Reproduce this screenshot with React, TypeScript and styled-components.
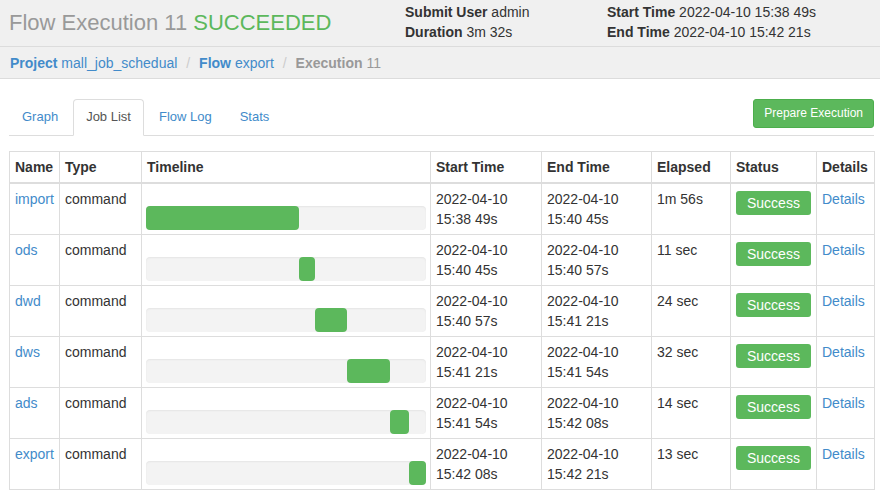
import styled, { createGlobalStyle } from "styled-components";

const GlobalStyle = createGlobalStyle`
  body {
    margin: 0;
    background: #fff;
    font-family: "Liberation Sans", Arial, sans-serif;
    font-size: 14px;
    line-height: 20px;
    color: #333;
  }
  a {
    color: #428bca;
    text-decoration: none;
  }
`;

const Header = styled.div`
  display: grid;
  grid-template-columns: 396px 202px 1fr;
  height: 46px;
  padding-left: 9px;
  background: #f0f0f0;
  border-bottom: 1px solid #dcdcdc;
`;

const Title = styled.h1`
  margin: 0;
  font-size: 22px;
  font-weight: normal;
  line-height: 46px;
  color: #999;
  white-space: nowrap;
`;

const Status = styled.span`
  color: #5cb85c;
`;

const InfoCol = styled.div`
  padding-top: 2px;
  white-space: nowrap;
`;

const InfoLine = styled.div`
  line-height: 20px;
`;

const Label = styled.strong`
  font-weight: bold;
  color: #333;
`;

const Breadcrumb = styled.div`
  display: flex;
  height: 21px;
  padding: 6px 10px 4px;
  background: #f0f0f0;
  border-bottom: 1px solid #dcdcdc;
  white-space: nowrap;
`;

const Crumb = styled.span<{ $active?: boolean }>`
  color: ${(p) => (p.$active ? "#999" : "#428bca")};
`;

const Sep = styled.span`
  padding: 0 5px 0 9px;
  color: #ccc;
`;

const Main = styled.div`
  padding: 20px 6px 0 9px;
`;

const TabBar = styled.div`
  display: flex;
  justify-content: space-between;
  align-items: flex-start;
  border-bottom: 1px solid #ddd;
`;

const Tabs = styled.ul`
  display: flex;
  margin: 0 0 -1px;
  padding: 0;
  list-style: none;
`;

const Tab = styled.li<{ $active?: boolean }>`
  margin-right: 2px;
  padding: 7px 12px 8px;
  font-size: 13px;
  line-height: 20px;
  border: 1px solid ${(p) => (p.$active ? "#ddd" : "transparent")};
  border-bottom-color: ${(p) => (p.$active ? "#fff" : "transparent")};
  border-radius: 4px 4px 0 0;
  background: ${(p) => (p.$active ? "#fff" : "transparent")};
  color: ${(p) => (p.$active ? "#555" : "#428bca")};
`;

const GreenButton = styled.button`
  height: 29px;
  padding: 5px 10px;
  font-family: inherit;
  font-size: 12px;
  line-height: 17px;
  color: #fff;
  background: #5cb85c;
  border: 1px solid #4cae4c;
  border-radius: 3px;
`;

const Table = styled.table`
  width: 865px;
  margin-top: 15px;
  border-collapse: collapse;
  table-layout: fixed;
  border: 1px solid #ddd;
`;

const Th = styled.th`
  padding: 5px;
  text-align: left;
  font-weight: bold;
  line-height: 20px;
  border: 1px solid #ddd;
  border-bottom: 2px solid #ddd;
  white-space: nowrap;
`;

const Td = styled.td<{ $tight?: boolean }>`
  padding: ${(p) => (p.$tight ? "5px 4px" : "5px")};
  vertical-align: top;
  line-height: 20px;
  border: 1px solid #ddd;
  white-space: nowrap;
`;

const Track = styled.div`
  display: flex;
  height: 24px;
  margin: 17px 0 -1px;
  background: #f3f3f3;
  border-radius: 4px;
  box-shadow: inset 0 1px 2px rgba(0, 0, 0, 0.06);
`;

const Fill = styled.div`
  height: 100%;
  background: #5cb85c;
  border-radius: 4px;
`;

const SuccessTag = styled.span`
  display: inline-block;
  margin-top: 2px;
  padding: 2px 11px;
  line-height: 20px;
  color: #fff;
  background: #5cb85c;
  border-radius: 3px;
`;

type Job = {
  name: string;
  offset: number;
  duration: number;
  start: [string, string];
  end: [string, string];
  elapsed: string;
};

const TOTAL = 212;

const jobs: Job[] = [
  { name: "import", offset: 0, duration: 116, start: ["2022-04-10", "15:38 49s"], end: ["2022-04-10", "15:40 45s"], elapsed: "1m 56s" },
  { name: "ods", offset: 116, duration: 12, start: ["2022-04-10", "15:40 45s"], end: ["2022-04-10", "15:40 57s"], elapsed: "11 sec" },
  { name: "dwd", offset: 128, duration: 24, start: ["2022-04-10", "15:40 57s"], end: ["2022-04-10", "15:41 21s"], elapsed: "24 sec" },
  { name: "dws", offset: 152, duration: 33, start: ["2022-04-10", "15:41 21s"], end: ["2022-04-10", "15:41 54s"], elapsed: "32 sec" },
  { name: "ads", offset: 185, duration: 14, start: ["2022-04-10", "15:41 54s"], end: ["2022-04-10", "15:42 08s"], elapsed: "14 sec" },
  { name: "export", offset: 199, duration: 13, start: ["2022-04-10", "15:42 08s"], end: ["2022-04-10", "15:42 21s"], elapsed: "13 sec" },
];

const colWidths = [50, 82, 289, 111, 110, 79, 86, 58];
const headers = ["Name", "Type", "Timeline", "Start Time", "End Time", "Elapsed", "Status", "Details"];

function App() {
  return (
    <>
      <GlobalStyle />
      <Header>
        <Title>
          Flow Execution 11 <Status>SUCCEEDED</Status>
        </Title>
        <InfoCol>
          <InfoLine>
            <Label>Submit User</Label> admin
          </InfoLine>
          <InfoLine>
            <Label>Duration</Label> 3m 32s
          </InfoLine>
        </InfoCol>
        <InfoCol>
          <InfoLine>
            <Label>Start Time</Label> 2022-04-10 15:38 49s
          </InfoLine>
          <InfoLine>
            <Label>End Time</Label> 2022-04-10 15:42 21s
          </InfoLine>
        </InfoCol>
      </Header>
      <Breadcrumb>
        <Crumb>
          <b>Project</b> mall_job_schedual
        </Crumb>
        <Sep>/&nbsp;</Sep>
        <Crumb>
          <b>Flow</b> export
        </Crumb>
        <Sep>/&nbsp;</Sep>
        <Crumb $active>
          <b>Execution</b> 11
        </Crumb>
      </Breadcrumb>
      <Main>
        <TabBar>
          <Tabs>
            <Tab>Graph</Tab>
            <Tab $active>Job List</Tab>
            <Tab>Flow Log</Tab>
            <Tab>Stats</Tab>
          </Tabs>
          <GreenButton>Prepare Execution</GreenButton>
        </TabBar>
        <Table>
          <colgroup>
            {colWidths.map((w, i) => (
              <col key={i} style={{ width: w }} />
            ))}
          </colgroup>
          <thead>
            <tr>
              {headers.map((h) => (
                <Th key={h}>{h}</Th>
              ))}
            </tr>
          </thead>
          <tbody>
            {jobs.map((job) => (
              <tr key={job.name}>
                <Td>
                  <a href="#">{job.name}</a>
                </Td>
                <Td>command</Td>
                <Td $tight>
                  <Track>
                    <Fill
                      style={{
                        marginLeft: `${(job.offset / TOTAL) * 100}%`,
                        width: `${(job.duration / TOTAL) * 100}%`,
                      }}
                    />
                  </Track>
                </Td>
                <Td>
                  {job.start[0]}
                  <br />
                  {job.start[1]}
                </Td>
                <Td>
                  {job.end[0]}
                  <br />
                  {job.end[1]}
                </Td>
                <Td>{job.elapsed}</Td>
                <Td>
                  <SuccessTag>Success</SuccessTag>
                </Td>
                <Td>
                  <a href="#">Details</a>
                </Td>
              </tr>
            ))}
          </tbody>
        </Table>
      </Main>
    </>
  );
}

export default App;
